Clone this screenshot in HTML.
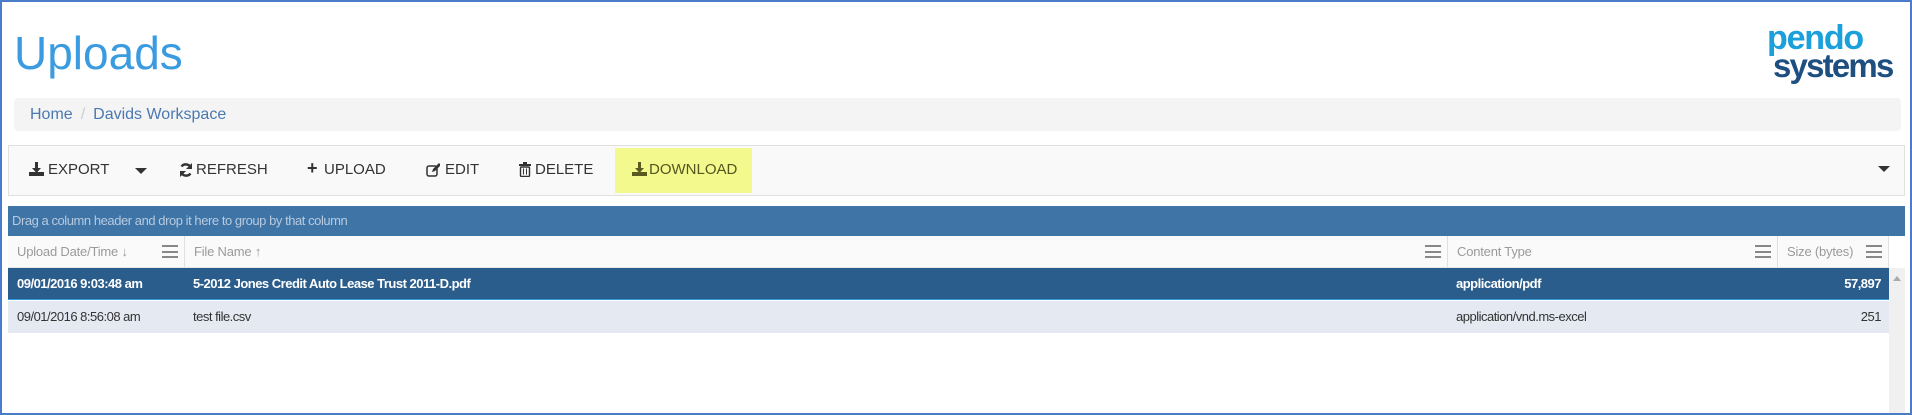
<!DOCTYPE html>
<html><head><style>
*{margin:0;padding:0;box-sizing:border-box}
body{width:1912px;height:415px;overflow:hidden;background:#fff;font-family:"Liberation Sans",sans-serif;position:relative}
.frame{position:absolute;left:0;top:0;width:1912px;height:415px;border:2px solid #4a7cc9}
.abs{position:absolute;white-space:nowrap}
h1{position:absolute;left:14px;top:27px;font-size:46px;font-weight:normal;color:#3a9be0;line-height:52px}
.logo1{left:1767px;top:20px;font-size:34px;font-weight:bold;color:#1ba0dc;letter-spacing:-1.2px;line-height:36px}
.logo2{left:1773px;top:48px;font-size:33px;font-weight:bold;color:#1d4f80;letter-spacing:-1.8px;line-height:36px}
.bc{left:14px;top:98px;width:1887px;height:33px;background:#f4f4f4;border-radius:4px;font-size:16px;color:#4a78b0;line-height:33px;padding-left:16px}
.bc span{color:#ccc;margin:0 8px}
.tb{left:8px;top:145px;width:1897px;height:51px;background:#f9f9f9;border:1px solid #e0e0e0}
.ti{position:absolute;top:15px;font-size:15px;color:#333;line-height:18px;white-space:nowrap}
.hl{position:absolute;left:606px;top:2px;width:137px;height:45px;background:#f4f98e}
.gb{left:8px;top:206px;width:1897px;height:30px;background:#3f74a6;color:#b7cadf;font-size:13px;line-height:30px;padding-left:4px;letter-spacing:-0.45px}
.hd{left:8px;top:236px;width:1881px;height:32px;background:#fafafa;border-bottom:1px solid #e6e6e6}
.hc{position:absolute;top:0;height:31px;border-right:1px solid #e0e0e0;font-size:13px;color:#9a9a9a;line-height:31px;padding-left:9px;letter-spacing:-0.2px}
.mn{position:absolute;right:6px;top:9px;width:16px;height:13px;border-top:2px solid #888;border-bottom:2px solid #888}
.mn:after{content:"";position:absolute;left:0;right:0;top:3.5px;height:2px;background:#888}
.row{left:8px;width:1881px;height:32px;font-size:13px;line-height:32px;letter-spacing:-0.5px}
.row div{position:absolute;top:0}
.r1{top:268px;background:#2a5d8c;color:#fff;font-weight:bold;border-bottom:1px solid #2e9ad8}
.r2{top:301px;background:#e5e9f1;color:#333}
.sb{left:1889px;top:268px;width:16px;height:145px;background:#f0f0f0}
</style></head><body>
<h1>Uploads</h1>
<div class="abs logo1">pendo</div>
<div class="abs logo2">systems</div>
<div class="abs bc">Home<span>/</span>Davids Workspace</div>
<div class="abs tb">
 <div class="hl"></div>
 <svg class="abs" style="left:20px;top:16px" width="15" height="15" viewBox="0 0 15 15"><path d="M6 0h3v6h3l-4.5 5L3 6h3z" fill="#333"/><rect x="0" y="10" width="15" height="4" fill="#333"/></svg>
 <div class="ti" style="left:39px">EXPORT</div>
 <svg class="abs" style="left:126px;top:22px" width="12" height="7"><path d="M0 0h12L6 6z" fill="#333"/></svg>
 <svg class="abs" style="left:170px;top:17px" width="14" height="14" viewBox="0 0 14 14"><path d="M12 5A5.5 5.5 0 0 0 2.5 3.5M2 9a5.5 5.5 0 0 0 9.5 1.5" stroke="#333" stroke-width="2.4" fill="none"/><path d="M13 0v6H7z M1 14V8h6z" fill="#333"/></svg>
 <div class="ti" style="left:187px">REFRESH</div>
 <div class="ti" style="left:298px;font-weight:bold;font-size:18px;top:13px">+</div>
 <div class="ti" style="left:315px">UPLOAD</div>
 <svg class="abs" style="left:417px;top:17px" width="14" height="14" viewBox="0 0 14 14"><rect x="1" y="3" width="10" height="10" rx="2" stroke="#333" stroke-width="1.5" fill="none"/><path d="M6 9l1-3 6-6 2 2-6 6z" fill="#333"/></svg>
 <div class="ti" style="left:436px">EDIT</div>
 <svg class="abs" style="left:510px;top:16px" width="12" height="15" viewBox="0 0 12 15"><rect x="0" y="2" width="12" height="2" fill="#333"/><rect x="4" y="0" width="4" height="2" fill="#333"/><rect x="1.5" y="5" width="9" height="9.5" rx="1" stroke="#333" stroke-width="1.4" fill="none"/><path d="M4.5 6.5v6M7.5 6.5v6" stroke="#333"/></svg>
 <div class="ti" style="left:526px">DELETE</div>
 <svg class="abs" style="left:623px;top:16px" width="15" height="15" viewBox="0 0 15 15"><path d="M6 0h3v6h3l-4.5 5L3 6h3z" fill="#5a5a20"/><rect x="0" y="10" width="15" height="4" fill="#5a5a20"/></svg>
 <div class="ti" style="left:640px;color:#555520">DOWNLOAD</div>
 <svg class="abs" style="left:1869px;top:20px" width="12" height="7"><path d="M0 0h12L6 6z" fill="#333"/></svg>
</div>
<div class="abs gb">Drag a column header and drop it here to group by that column</div>
<div class="abs hd">
 <div class="hc" style="left:0;width:177px">Upload Date/Time ↓<div class="mn"></div></div>
 <div class="hc" style="left:177px;width:1263px">File Name ↑<div class="mn"></div></div>
 <div class="hc" style="left:1440px;width:330px">Content Type<div class="mn"></div></div>
 <div class="hc" style="left:1770px;width:111px">Size (bytes)<div class="mn"></div></div>
</div>
<div class="abs row r1"><div style="left:9px">09/01/2016 9:03:48 am</div><div style="left:185px">5-2012 Jones Credit Auto Lease Trust 2011-D.pdf</div><div style="left:1448px">application/pdf</div><div style="right:8px">57,897</div></div>
<div class="abs row r2"><div style="left:9px">09/01/2016 8:56:08 am</div><div style="left:185px">test file.csv</div><div style="left:1448px">application/vnd.ms-excel</div><div style="right:8px">251</div></div>
<div class="abs sb"><svg style="position:absolute;left:4px;top:8px" width="8" height="5"><path d="M0 5h8L4 0z" fill="#aaa"/></svg></div>
<div class="frame"></div>
</body></html>
